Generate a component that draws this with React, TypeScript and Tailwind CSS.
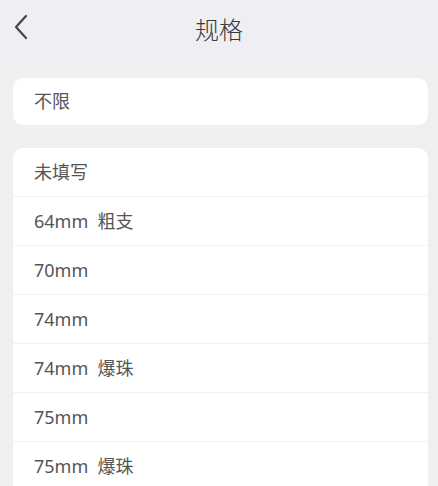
import React from "react";

const options = ["未填写", "64mm 粗支", "70mm", "74mm", "74mm 爆珠", "75mm", "75mm 爆珠"];

const App = () => {
  return (
    <div
      className="min-h-screen bg-[#efeff2] text-[#555555]"
      style={{ fontFamily: '"Noto Sans", "Noto Sans CJK SC", sans-serif' }}
    >
      {/* header */}
      <div className="relative flex h-[60px] items-center justify-center bg-[#eeeef3]">
        <button className="absolute left-[12px] top-[14px] flex h-[26px] w-[18px] items-center justify-center">
          <svg width="16" height="26" viewBox="0 0 16 26" fill="none">
            <path d="M13 2 L3 13 L13 24" stroke="#444" strokeWidth="2.2" strokeLinecap="round" strokeLinejoin="round" />
          </svg>
        </button>
        <h1 className="text-[24px] font-light leading-none text-[#3a3a3a]">规格</h1>
      </div>

      <div className="flex flex-col gap-[23px] pl-[13px] pr-[10px] pt-[18px]">
        <div className="flex h-[47px] items-center rounded-[10px] bg-white px-[21px] text-[18px]">
          不限
        </div>

        <div className="flex flex-col overflow-hidden rounded-t-[10px] bg-white pb-[20px]">
          {options.map((o, i) => (
            <div
              key={o}
              className={
                i === 0
                  ? "flex h-[48px] items-center px-[21px] text-[18px] whitespace-pre"
                  : "flex h-[49px] items-center border-t border-[#f2f2f2] px-[21px] text-[18px] whitespace-pre"
              }
            >
              {o.replace(" ", "  ")}
            </div>
          ))}
        </div>
      </div>
    </div>
  );
};

export default App;
